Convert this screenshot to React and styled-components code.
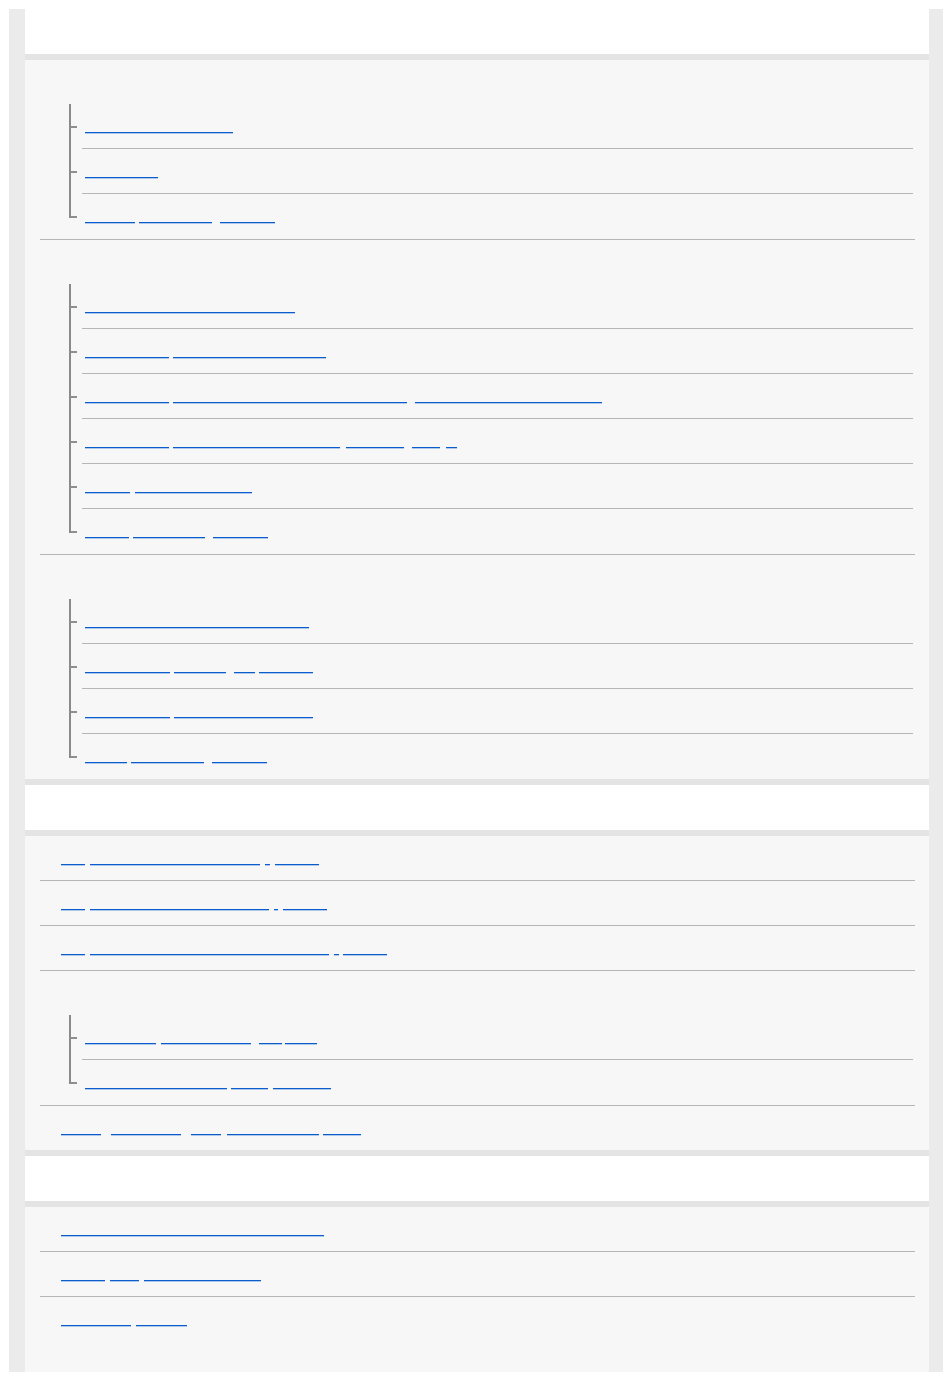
import styled, { createGlobalStyle } from "styled-components";

const GlobalStyle = createGlobalStyle`
    html, body {
        margin: 0;
        padding: 0;
        background: #fff;
    }
    body {
        font-family: "Liberation Sans", Arial, sans-serif;
    }
`;

const Frame = styled.div`
    margin: 9px 7px 7px 9px;
    padding: 0 14px 0 16px;
    background: #ebebeb;
`;

const Header = styled.h2`
    margin: 0;
    height: 45px;
    background: #fff;
    font-size: 16px;
    line-height: 45px;
    padding-left: 36px;
    color: transparent;
    font-weight: normal;
`;

const Panel = styled.ul`
    list-style: none;
    margin: 0;
    padding: 0 14px ${({ $last }) => ($last ? "31px" : "0")} 15px;
    background: #f7f7f7;
    border-top: 6px solid #e4e4e4;
    border-bottom: ${({ $last }) => ($last ? "none" : "6px solid #e4e4e4")};
`;

const Item = styled.li`
    border-bottom: 1px solid #b6b6b6;

    &:last-child {
        border-bottom: none;
    }
`;

const Row = styled.div`
    display: flex;
    align-items: flex-start;
    height: 44px;
    box-sizing: border-box;
    padding: 13px 0 0 ${({ $indent }) => $indent}px;
`;

const Label = styled.span`
    font-size: 10px;
    line-height: 15px;
    color: transparent;
`;

const Word = styled.a`
    display: inline-block;
    flex: none;
    width: ${({ $w }) => $w}px;
    margin-left: ${({ $gap }) => $gap || 0}px;
    height: 15px;
    font-size: 10px;
    line-height: 15px;
    color: transparent;
    white-space: nowrap;
    overflow: hidden;
    text-decoration: none;
    border-bottom: 1px solid #0a5dce;
    box-shadow: 0 1px 0 rgba(10, 93, 206, 0.3);
`;

const Nested = styled.ul`
    list-style: none;
    margin: 0 2px 0 42px;
    padding: 0;
`;

const Child = styled.li`
    position: relative;
    border-bottom: 1px solid #b6b6b6;

    &::before {
        content: "";
        position: absolute;
        left: -12px;
        top: 22px;
        width: 7px;
        height: 2px;
        background: #8f8f8f;
    }
    &::after {
        content: "";
        position: absolute;
        left: -13px;
        top: 0;
        bottom: -1px;
        width: 2px;
        background: #8a8a8a;
    }
    &:last-child {
        border-bottom-color: transparent;
    }
    &:last-child::after {
        bottom: auto;
        height: 24px;
    }
`;

const sections = [
    {
        title: "Getting started",
        items: [
            {
                label: "Getting started",
                children: [
                    [["Checking the contents", 148]],
                    [["Part names", 73]],
                    [["Before", 50], ["using the", 73, 4], ["product", 55, 8]],
                ],
            },
            {
                label: "Preparations",
                children: [
                    [["Charging the battery pack", 210]],
                    [["Inserting", 84], ["the memory card", 153, 4]],
                    [
                        ["Inserting", 84],
                        ["the battery pack into the camera", 234, 4],
                        ["while the power is off", 187, 8],
                    ],
                    [
                        ["Setting", 84],
                        ["the date and the time", 167, 4],
                        ["zone", 58, 6],
                        ["of", 28, 8],
                        ["a", 11, 6],
                    ],
                    [["Using", 45], ["the tripod mount", 117, 5]],
                    [["About", 44], ["the lens", 72, 4], ["cover", 55, 8]],
                ],
            },
            {
                label: "Shooting",
                children: [
                    [["Shooting still images automatically", 224]],
                    [
                        ["Shooting", 85],
                        ["movies", 52, 4],
                        ["in", 21, 8],
                        ["4K mode", 54, 4],
                    ],
                    [["Shooting", 85], ["with manual focus", 139, 4]],
                    [["Using", 42], ["the menu", 73, 4], ["items", 55, 8]],
                ],
            },
        ],
    },
    {
        title: "Playback",
        items: [
            {
                words: [
                    ["01", 24],
                    ["Viewing images on the monitor", 170, 5],
                    ["/", 5, 5],
                    ["index", 44, 5],
                ],
            },
            {
                words: [
                    ["02", 24],
                    ["Viewing images on a TV screen", 179, 5],
                    ["/", 4, 5],
                    ["HDMI", 44, 5],
                ],
            },
            {
                words: [
                    ["03", 24],
                    ["Transferring images via Wi-Fi", 239, 5],
                    ["/", 5, 5],
                    ["app", 44, 4],
                ],
            },
            {
                label: "Editing",
                children: [
                    [
                        ["Rotating", 71],
                        ["recorded images", 90, 5],
                        ["to", 23, 8],
                        ["fit", 32, 3],
                    ],
                    [
                        ["Protecting recorded", 142],
                        ["all", 37, 4],
                        ["settings", 58, 5],
                    ],
                ],
            },
            {
                words: [
                    ["Delete", 40],
                    ["multiple", 70, 10],
                    ["all", 30, 10],
                    ["images at once", 92, 6],
                    ["now", 38, 4],
                ],
            },
        ],
    },
    {
        title: "Appendix",
        items: [
            { words: [["Specifications and trademarks notice", 263]] },
            {
                words: [
                    ["Using", 44],
                    ["the", 29, 5],
                    ["camera abroad safely", 117, 5],
                ],
            },
            { words: [["Help", 70], ["guide", 51, 5]] },
        ],
    },
];

const Words = ({ words, indent }) => (
    <Row $indent={indent}>
        {words.map(([text, w, gap], i) => (
            <Word key={i} href="#" $w={w} $gap={gap}>
                {text}
            </Word>
        ))}
    </Row>
);

const App = () => {
    return (
        <>
            <GlobalStyle />
            <Frame>
                {sections.map((section, si) => (
                    <section key={si}>
                        <Header>{section.title}</Header>
                        <Panel $last={si === sections.length - 1}>
                            {section.items.map((item, ii) => (
                                <Item key={ii}>
                                    {item.children ? (
                                        <>
                                            <Row $indent={21}>
                                                <Label>{item.label}</Label>
                                            </Row>
                                            <Nested>
                                                {item.children.map((words, ci) => (
                                                    <Child key={ci}>
                                                        <Words words={words} indent={3} />
                                                    </Child>
                                                ))}
                                            </Nested>
                                        </>
                                    ) : (
                                        <Words words={item.words} indent={21} />
                                    )}
                                </Item>
                            ))}
                        </Panel>
                    </section>
                ))}
            </Frame>
        </>
    );
};

export default App;
